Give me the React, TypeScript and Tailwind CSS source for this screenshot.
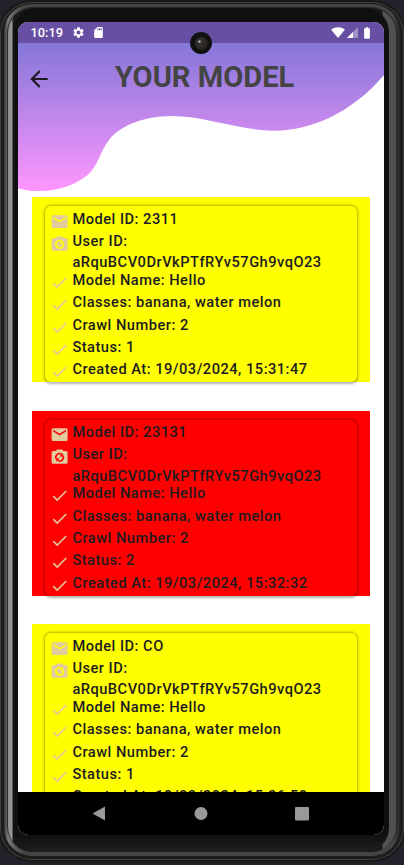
import React from "react";
import { MdArrowBack, MdBatteryFull, MdCheck, MdMail, MdSdCard, MdSettings } from "react-icons/md";

type Model = {
  id: string;
  status: number;
  createdAt: string;
  failed?: boolean;
};

const models: Model[] = [
  { id: "2311", status: 1, createdAt: "19/03/2024, 15:31:47" },
  { id: "23131", status: 2, createdAt: "19/03/2024, 15:32:32", failed: true },
  { id: "CO", status: 1, createdAt: "19/03/2024, 15:36:50" },
];

/* Camera body whose lens is a pair of rotating arrows in the card's colour. */
function CameraSync({ size, className, cut }: { size: number; className: string; cut: string }) {
  return (
    <svg width={size} height={size} viewBox="0 0 24 24" className={className}>
      <path
        fill="currentColor"
        d="M9 3L7.2 5H4C2.9 5 2 5.9 2 7V19C2 20.1 2.9 21 4 21H20C21.1 21 22 20.1 22 19V7C22 5.9 21.1 5 20 5H16.8L15 3Z"
      />
      <g fill="none" stroke={cut} strokeWidth="1.9">
        <path d="M7.9 15.2A4.5 4.5 0 0 1 14.6 9.4" />
        <path d="M16.1 10.8A4.5 4.5 0 0 1 9.4 16.6" />
      </g>
      <path d="M16.2 7.6V12H11.8ZM7.8 18.4V14H12.2Z" fill={cut} />
    </svg>
  );
}

function Row({ kind, cut, children }: { kind: "mail" | "camera" | "check"; cut: string; children: React.ReactNode }) {
  const iconClass = "mt-[3px] -ml-[0.5px] mr-[3.2px] shrink-0 text-[#e2cb9f]";
  return (
    <div className={`flex items-start ${kind === "camera" ? "h-[39px]" : "h-[22.35px]"}`}>
      {kind === "mail" && <MdMail size={19.2} className={iconClass} />}
      {kind === "camera" && <CameraSync size={19.2} className={iconClass} cut={cut} />}
      {kind === "check" && <MdCheck size={19.2} className={iconClass} />}
      <div className="whitespace-pre">{children}</div>
    </div>
  );
}

function Card({ model }: { model: Model }) {
  const fill = model.failed ? "bg-[#ff0000]" : "bg-[#ffff00]";
  const cut = model.failed ? "#ff0000" : "#ffff00";
  return (
    <div className={`h-[185px] w-[338px] shrink-0 pt-[9px] pl-[12.5px] ${fill}`}>
      <div className={`h-[176px] w-[312.5px] rounded-[6px] pt-[2.5px] pl-[6px] shadow-[0_0.5px_2.5px_1px_rgba(0,0,0,0.3)] ${fill}`}>
        <Row kind="mail" cut={cut}>Model ID: {model.id}</Row>
        <Row kind="camera" cut={cut}>{"User ID:\naRquBCV0DrVkPTfRYv57Gh9vqO23"}</Row>
        <Row kind="check" cut={cut}>Model Name: Hello</Row>
        <Row kind="check" cut={cut}>Classes: banana, water melon</Row>
        <Row kind="check" cut={cut}>Crawl Number: 2</Row>
        <Row kind="check" cut={cut}>Status: {model.status}</Row>
        <Row kind="check" cut={cut}>Created At: {model.createdAt}</Row>
      </div>
    </div>
  );
}

function StatusBar() {
  return (
    <div className="flex h-[21px] shrink-0 items-center bg-[#6750a4] pl-[12.5px] text-white">
      <span className="w-[33px] pt-px text-[12.8px] leading-[20px] font-medium">10:19</span>
      <MdSettings size={13} className="ml-[8.5px]" />
      <MdSdCard size={13} className="ml-[7px]" />
      <svg className="ml-auto" width="14" height="11" viewBox="0 0 14 11">
        <path d="M0 2.6C4-.7 10-.7 14 2.6L7 11Z" fill="currentColor" />
      </svg>
      <svg className="ml-[2px]" width="11" height="11" viewBox="0 0 11 11">
        <path d="M11 0V11H0Z" fill="#a092c8" />
        <path d="M6 5V11H0Z" fill="currentColor" />
      </svg>
      <MdBatteryFull size={14} className="mr-[10px] ml-[2.5px]" />
    </div>
  );
}

export default function App() {
  return (
    <div
      className="h-[865px] w-[404px] overflow-hidden bg-[#22232a] text-[#1d1b20]"
      style={{ fontFamily: "Roboto, sans-serif" }}
    >
      {/* Metal outer shell */}
      <div className="-ml-[2px] h-[862px] w-[408px] rounded-[34px] bg-[#191919] p-[2px]">
        <div className="h-full rounded-[32px] bg-[#404040] p-px">
          <div className="h-full rounded-[31px] bg-[#1c1c1c] px-[3px] pt-px pb-[3px]">
            <div className="h-full rounded-[28px] bg-[linear-gradient(90deg,#303030_0px,#555_2px,#777_4px,#606060_10px,#444_20px,#444_382px,#484848_388px,#383838_392px,#252525_396px)] px-[3px] pt-[3px] pb-[4px]">
              <div className="h-full rounded-[26px] bg-[#292929] px-px pt-px">
                <div className="h-full rounded-[25px] bg-[linear-gradient(90deg,#888_0px,#999_4px,#181818_5px,#181818_374px,#555_375px,#505050_384px)]">
                  <div className="mr-[7px] ml-[5px] h-full rounded-[24px] bg-[linear-gradient(180deg,#101010_0px,#101010_826px,#202020_845px)] pt-[14px] pl-[5px]">
                    {/* Display */}
                    <div className="relative flex h-[813px] w-[366px] flex-col overflow-hidden rounded-[10px] bg-white">
                      <StatusBar />
                      <span className="absolute top-[10px] left-[172px] z-10 flex size-[22px] items-center justify-center rounded-full bg-[#101010]">
                        <span className="size-[13px] rounded-full bg-[radial-gradient(circle_at_35%_35%,#d8d8d8_0,#333_15%,#2b241b_65%,#111_100%)]" />
                      </span>

                      <main className="relative h-[749px] overflow-hidden">
                        <svg className="absolute top-0 left-0" width="366" height="150" viewBox="18 43 366 150">
                          <defs>
                            <linearGradient id="wave" x1="0" y1="43" x2="0" y2="191" gradientUnits="userSpaceOnUse">
                              <stop stopColor="#8477d8" />
                              <stop offset="1" stopColor="#ff96ff" />
                            </linearGradient>
                          </defs>
                          <path
                            fill="url(#wave)"
                            d="M18 43H384V75C352 113 310 131 274 130.7C238 130.3 205 116 172 116C140 116 118 128 109 140C99 153 98 168 85 177C64 192 38 193.5 18 188.5Z"
                          />
                        </svg>
                        <header className="relative flex h-[154px] items-start pt-[17.5px] pl-[8px]">
                          <MdArrowBack size={26} className="mt-[5.5px] shrink-0 text-[#1d1b20]" />
                          <h1 className="ml-[63px] text-[29.1px] leading-[33px] font-bold whitespace-nowrap text-[#444]">
                            YOUR MODEL
                          </h1>
                        </header>
                        <div className="flex flex-col gap-[28.5px] pl-[14px] text-[14.64px] leading-[21.3px] font-medium tracking-[0.5px]">
                          {models.map((model) => (
                            <Card key={model.id} model={model} />
                          ))}
                        </div>
                      </main>

                      <nav className="h-[43px] shrink-0 bg-black">
                        <svg width="366" height="43" viewBox="0 0 366 43" fill="#999">
                          <path d="M74.5 21.5L87 14.5V28.5Z" />
                          <circle cx="183" cy="21.5" r="6.5" />
                          <rect x="277" y="15" width="14" height="13.5" rx="1" />
                        </svg>
                      </nav>
                    </div>
                  </div>
                </div>
              </div>
            </div>
          </div>
        </div>
      </div>
    </div>
  );
}
